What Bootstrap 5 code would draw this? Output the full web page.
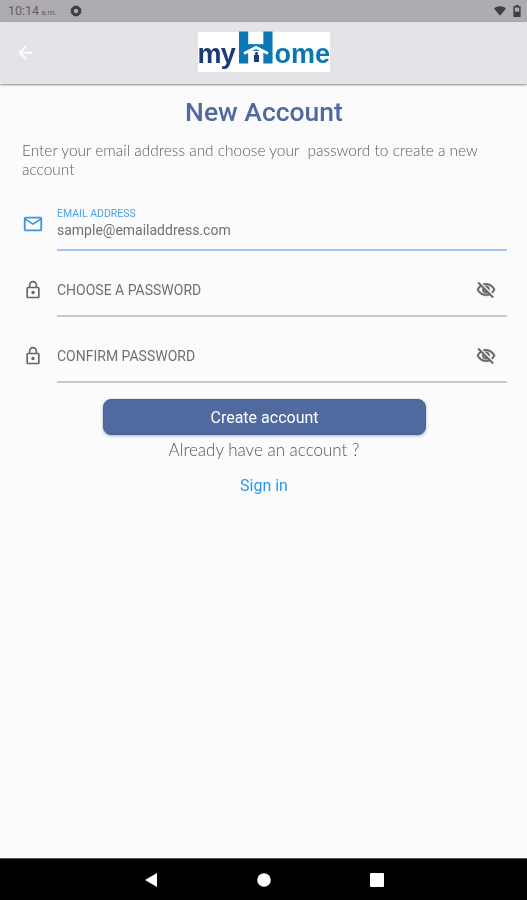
<!DOCTYPE html>
<html lang="en">
<head>
<meta charset="utf-8">
<meta name="viewport" content="width=device-width, initial-scale=1">
<title>New Account</title>
<link rel="stylesheet" href="https://cdn.jsdelivr.net/npm/bootstrap@5.3.0/dist/css/bootstrap.min.css">
<style>
html,body{height:100%;overflow:hidden}
body{background:#fbfbfc;font-family:Roboto,"Liberation Sans",sans-serif}
.screen{height:900px;filter:blur(.5px)}
.status-strip{height:22px;background:#aeacb0;color:#616064;font-size:12.5px;padding:0 6px 0 8px}
.status-strip small{font-size:8px;margin-left:2px}
.status-badge{margin-left:13px}
.status-right{gap:7px}
.app-strip{height:62px;background:#e4e3e8;box-shadow:0 1px 2px rgba(0,0,0,.45);position:relative}
.app-strip .back-btn{position:absolute;left:15px;top:20px;line-height:0}
.logo-box{width:132px;height:40px;background:#fff;margin-top:10px;position:relative;font-family:"Liberation Sans",sans-serif;font-weight:700;font-size:27px;line-height:1;white-space:nowrap}
.logo-my{color:#1d3a78;position:absolute;left:0;top:9px;letter-spacing:-.8px}
.logo-h{color:#0a78b4;font-size:43.5px;line-height:.7;position:absolute;left:38px;top:1px;transform:scaleX(1.26);transform-origin:left top;-webkit-text-stroke:1px #0a78b4}
.logo-ome{color:#0a78b4;position:absolute;left:77px;top:9px}
.logo-roof{position:absolute;left:41px;top:12px}
.page-title{color:#5069a0;font-size:26.5px;font-weight:500;line-height:30px;margin:13px 0 0;padding-left:1px;text-align:center}
.intro-text{font-family:Lato,sans-serif;font-weight:300;font-size:15.45px;line-height:19px;color:#5d5d5d;margin:14px 20px 0 22px}
.fields{padding:0 20px 0 23px;margin-top:29px}
.field-row{gap:16px}
.field-icon{width:18px;flex:none;line-height:0}
.field-box{height:66px;border-bottom:2px solid #c9c9c9;padding-top:29px}
.field-active{height:43px;border-bottom-color:#a3c6ee;padding-top:0}
.mail-icon{margin:5px 1px 0 -1px}
.lock-icon{padding-top:29px}
.field-label-top{font-size:10.5px;line-height:11px;color:#4ea2ee;margin-bottom:1px}
.field-value{font-size:14px;line-height:20px;color:#707070}
.field-label{font-size:14px;color:#707070;line-height:20px}
.eye-btn{line-height:0;margin-right:11px}
.eye-btn path{stroke:#666;stroke-width:.5}
.create-btn{display:block;width:323px;height:36px;margin:16px 0 0 103px;background:#506a9f;border:1px solid #4a6497;border-radius:8px;color:#fff;font-size:16px;font-weight:400;line-height:36px;padding:0;box-shadow:0 1px 3px rgba(60,80,130,.45)}
.create-btn:hover{background:#506a9f;color:#fff;border-color:#4a6497}
.have-account{font-family:Lato,sans-serif;font-weight:300;font-size:17px;line-height:24px;color:#555;text-align:center;margin:3px 0 0;padding-left:1px}
.signin-link{display:block;text-align:center;color:#2e96ea;font-size:16px;font-weight:400;text-decoration:none;line-height:20px;margin-top:14px;padding-left:1px}
.nav-strip{position:absolute;left:0;right:0;top:858px;height:42px;background:#000;border-top:1px solid #555;padding-left:144px;gap:99px}
</style>
</head>
<body>
<div class="screen position-relative">
  <div class="status-strip d-flex align-items-center justify-content-between">
    <div class="d-flex align-items-center">
      <span>10:14<small>a.m.</small></span>
      <svg class="status-badge" width="12" height="12" viewBox="0 0 12 12"><path fill="#3f3e42" d="M4 .8h4L11.2 4v4L8 11.2H4L.8 8V4z"/><circle cx="6" cy="6" r="2.2" fill="#aeacb0"/></svg>
    </div>
    <div class="status-right d-flex align-items-center">
      <svg width="12" height="10" viewBox="0 0 14 11"><path fill="#3f3e42" d="M0 2.6C3.8-.8 10.2-.8 14 2.6L7 11z"/></svg>
      <svg width="8" height="12" viewBox="0 0 8 12"><path fill="#3f3e42" d="M2.6 0h2.8v1.2H7.6V12H.4V1.2h2.2z"/><rect x="1.8" y="2.6" width="4.4" height="4" fill="#aeacb0"/></svg>
    </div>
  </div>
  <div class="app-strip d-flex justify-content-center">
    <div class="back-btn"><svg width="21" height="21" viewBox="0 0 24 24"><path fill="#fff" d="M20 11H7.83l5.59-5.59L12 4l-8 8 8 8 1.41-1.41L7.83 13H20v-2z"/></svg></div>
    <div class="logo-box">
      <span class="logo-my">my</span><span class="logo-h">H</span><span class="logo-ome">ome</span>
      <svg class="logo-roof" width="34" height="19" viewBox="0 0 34 19"><path fill="#0a78b4" d="M9 7 17 0l8 7z"/><path fill="#fff" d="M12 8h10v11H12z"/><path fill="none" stroke="#fff" stroke-width="3" d="M5 9.5 17 3.5l12 6"/><path fill="#1d3a78" d="M15 11h5v7h-5z"/><circle cx="17.5" cy="9.5" r="1.6" fill="#1d3a78"/></svg>
    </div>
  </div>

  <h1 class="page-title">New Account</h1>
  <p class="intro-text">Enter your email address and choose your&nbsp; password to create a new account</p>

  <div class="fields">
    <div class="field-row d-flex align-items-start">
      <div class="field-icon mail-icon"><svg width="22" height="22" viewBox="0 0 24 24"><path fill="#3d93e4" d="M20 4H4c-1.1 0-1.99.9-1.99 2L2 18c0 1.1.9 2 2 2h16c1.1 0 2-.9 2-2V6c0-1.1-.9-2-2-2zm0 14H4V8l8 5 8-5v10zm-8-7L4 6h16l-8 5z"/></svg></div>
      <div class="field-box field-active flex-grow-1">
        <div class="field-label-top">EMAIL ADDRESS</div>
        <div class="field-value">sample@emailaddress.com</div>
      </div>
    </div>
    <div class="field-row d-flex align-items-start">
      <div class="field-icon lock-icon"><svg width="20" height="20" viewBox="0 0 24 24"><path fill="#666" d="M12 17c1.1 0 2-.9 2-2s-.9-2-2-2-2 .9-2 2 .9 2 2 2zm6-9h-1V6c0-2.76-2.24-5-5-5S7 3.24 7 6v2H6c-1.1 0-2 .9-2 2v10c0 1.1.9 2 2 2h12c1.1 0 2-.9 2-2V10c0-1.1-.9-2-2-2zM8.9 6c0-1.71 1.39-3.1 3.1-3.1s3.1 1.39 3.1 3.1v2H8.9V6zM18 20H6V10h12v10z"/></svg></div>
      <div class="field-box flex-grow-1 d-flex justify-content-between">
        <div class="field-label">CHOOSE A PASSWORD</div>
        <div class="eye-btn"><svg width="20" height="20" viewBox="0 0 24 24"><path fill="#666" d="M12 6c3.79 0 7.17 2.13 8.82 5.5-.59 1.22-1.42 2.27-2.41 3.12l1.41 1.41c1.39-1.23 2.49-2.77 3.18-4.53C21.27 7.11 17 4 12 4c-1.27 0-2.49.2-3.64.57l1.65 1.65C10.66 6.09 11.32 6 12 6zm-1.07 1.14L13 9.21c.57.25 1.03.71 1.28 1.28l2.07 2.07c.08-.34.14-.7.14-1.07C16.5 9.01 14.48 7 12 7c-.37 0-.72.05-1.07.14zM2.01 3.87l2.68 2.68C3.06 7.83 1.77 9.53 1 11.5 2.73 15.89 7 19 12 19c1.52 0 2.98-.29 4.32-.82l3.42 3.42 1.41-1.41L3.42 2.45 2.01 3.87zm7.5 7.5l2.61 2.61c-.04.01-.08.02-.12.02-1.38 0-2.5-1.12-2.5-2.5 0-.05.01-.08.01-.13zm-3.4-3.4l1.75 1.75c-.23.55-.36 1.15-.36 1.78 0 2.48 2.02 4.5 4.5 4.5.63 0 1.23-.13 1.77-.36l.98.98c-.88.24-1.8.38-2.75.38-3.79 0-7.17-2.13-8.82-5.5.7-1.43 1.72-2.61 2.93-3.53z"/></svg></div>
      </div>
    </div>
    <div class="field-row d-flex align-items-start">
      <div class="field-icon lock-icon"><svg width="20" height="20" viewBox="0 0 24 24"><path fill="#666" d="M12 17c1.1 0 2-.9 2-2s-.9-2-2-2-2 .9-2 2 .9 2 2 2zm6-9h-1V6c0-2.76-2.24-5-5-5S7 3.24 7 6v2H6c-1.1 0-2 .9-2 2v10c0 1.1.9 2 2 2h12c1.1 0 2-.9 2-2V10c0-1.1-.9-2-2-2zM8.9 6c0-1.71 1.39-3.1 3.1-3.1s3.1 1.39 3.1 3.1v2H8.9V6zM18 20H6V10h12v10z"/></svg></div>
      <div class="field-box flex-grow-1 d-flex justify-content-between">
        <div class="field-label">CONFIRM PASSWORD</div>
        <div class="eye-btn"><svg width="20" height="20" viewBox="0 0 24 24"><path fill="#666" d="M12 6c3.79 0 7.17 2.13 8.82 5.5-.59 1.22-1.42 2.27-2.41 3.12l1.41 1.41c1.39-1.23 2.49-2.77 3.18-4.53C21.27 7.11 17 4 12 4c-1.27 0-2.49.2-3.64.57l1.65 1.65C10.66 6.09 11.32 6 12 6zm-1.07 1.14L13 9.21c.57.25 1.03.71 1.28 1.28l2.07 2.07c.08-.34.14-.7.14-1.07C16.5 9.01 14.48 7 12 7c-.37 0-.72.05-1.07.14zM2.01 3.87l2.68 2.68C3.06 7.83 1.77 9.53 1 11.5 2.73 15.89 7 19 12 19c1.52 0 2.98-.29 4.32-.82l3.42 3.42 1.41-1.41L3.42 2.45 2.01 3.87zm7.5 7.5l2.61 2.61c-.04.01-.08.02-.12.02-1.38 0-2.5-1.12-2.5-2.5 0-.05.01-.08.01-.13zm-3.4-3.4l1.75 1.75c-.23.55-.36 1.15-.36 1.78 0 2.48 2.02 4.5 4.5 4.5.63 0 1.23-.13 1.77-.36l.98.98c-.88.24-1.8.38-2.75.38-3.79 0-7.17-2.13-8.82-5.5.7-1.43 1.72-2.61 2.93-3.53z"/></svg></div>
      </div>
    </div>
  </div>

  <button type="button" class="btn create-btn">Create account</button>
  <p class="have-account">Already have an account ?</p>
  <a href="#" class="signin-link">Sign in</a>

  <div class="nav-strip d-flex align-items-center">
    <svg width="14" height="14" viewBox="0 0 14 14"><path fill="#fff" d="M13 0v14L1 7z"/></svg>
    <svg width="14" height="14" viewBox="0 0 14 14"><circle cx="7" cy="7" r="6.8" fill="#fff"/></svg>
    <svg width="14" height="14" viewBox="0 0 14 14"><rect width="14" height="14" rx="1" fill="#fff"/></svg>
  </div>
</div>
<script src="https://cdn.jsdelivr.net/npm/bootstrap@5.3.0/dist/js/bootstrap.bundle.min.js"></script>
</body>
</html>
